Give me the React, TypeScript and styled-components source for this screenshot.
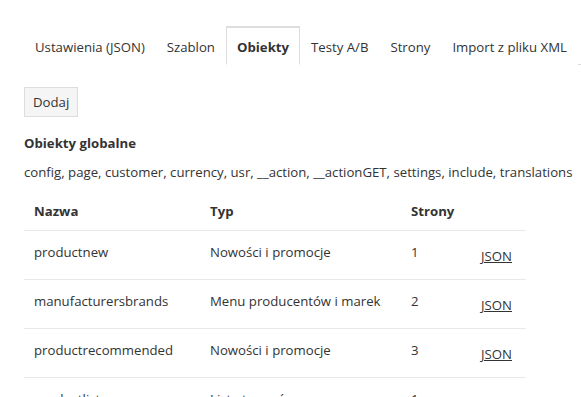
import styled, { createGlobalStyle } from "styled-components";

const GlobalStyle = createGlobalStyle`
  body {
    margin: 0;
    background: #fff;
    font-family: "Open Sans", "Noto Sans", sans-serif;
    font-size: 13.2px;
    line-height: 18px;
    color: #333;
  }
`;

const Page = styled.div`
  padding: 26px 0 0 24px;
`;

const Tabs = styled.ul`
  display: flex;
  list-style: none;
  margin: 0;
  padding: 0;
  border-bottom: 1px solid #ddd;
`;

const Tab = styled.li<{ $active?: boolean }>`
  margin-bottom: -1px;
  padding: 10px 10px 8px;
  border: 1px solid ${(p) => (p.$active ? "#ddd" : "transparent")};
  border-top-width: 2px;
  border-bottom-color: ${(p) => (p.$active ? "#fff" : "transparent")};
  font-weight: ${(p) => (p.$active ? 700 : 400)};
  background: #fff;
`;

const Button = styled.button`
  margin-top: 22px;
  font-family: inherit;
  font-size: 13.2px;
  color: #333;
  background: #f5f5f5;
  border: 1px solid #ddd;
  padding: 6px 8px 5px;
  line-height: 17px;
`;

const Heading = styled.h4`
  margin: 17px 0 0;
  font-size: 13.2px;
  font-weight: 700;
`;

const Globals = styled.p`
  margin: 11px 0 0;
  white-space: nowrap;
`;

const Table = styled.table`
  margin-top: 11px;
  width: 502px;
  table-layout: fixed;
  border-collapse: collapse;
`;

const Th = styled.th<{ $w?: number }>`
  text-align: left;
  font-weight: 700;
  padding: 10px 10px 10px;
  border-bottom: 1px solid #e8e8e8;
  width: ${(p) => (p.$w ? `${p.$w}px` : "auto")};
  box-sizing: border-box;
`;

const Td = styled.td`
  padding: 12px 10px 18px;
  border-bottom: 1px solid #e8e8e8;
  vertical-align: top;
  white-space: nowrap;
`;

const LinkCell = styled(Td)`
  padding-top: 16px;
  padding-bottom: 14px;
`;

const JsonLink = styled.a`
  color: #333;
  text-decoration: underline;
`;

const rows = [
  { name: "productnew", type: "Nowości i promocje", pages: 1 },
  { name: "manufacturersbrands", type: "Menu producentów i marek", pages: 2 },
  { name: "productrecommended", type: "Nowości i promocje", pages: 3 },
  { name: "productlist", type: "Lista towarów", pages: 1 },
];

const tabs = ["Ustawienia (JSON)", "Szablon", "Obiekty", "Testy A/B", "Strony", "Import z pliku XML"];

export default function App() {
  return (
    <Page>
      <GlobalStyle />
      <Tabs>
        {tabs.map((t) => (
          <Tab key={t} $active={t === "Obiekty"}>
            {t}
          </Tab>
        ))}
      </Tabs>
      <Button>Dodaj</Button>
      <Heading>Obiekty globalne</Heading>
      <Globals>config, page, customer, currency, usr, __action, __actionGET, settings, include, translations</Globals>
      <Table>
        <thead>
          <tr>
            <Th $w={176}>Nazwa</Th>
            <Th $w={201}>Typ</Th>
            <Th $w={70}>Strony</Th>
            <Th />
          </tr>
        </thead>
        <tbody>
          {rows.map((r) => (
            <tr key={r.name}>
              <Td>{r.name}</Td>
              <Td>{r.type}</Td>
              <Td>{r.pages}</Td>
              <LinkCell>
                <JsonLink href="#">JSON</JsonLink>
              </LinkCell>
            </tr>
          ))}
        </tbody>
      </Table>
    </Page>
  );
}
